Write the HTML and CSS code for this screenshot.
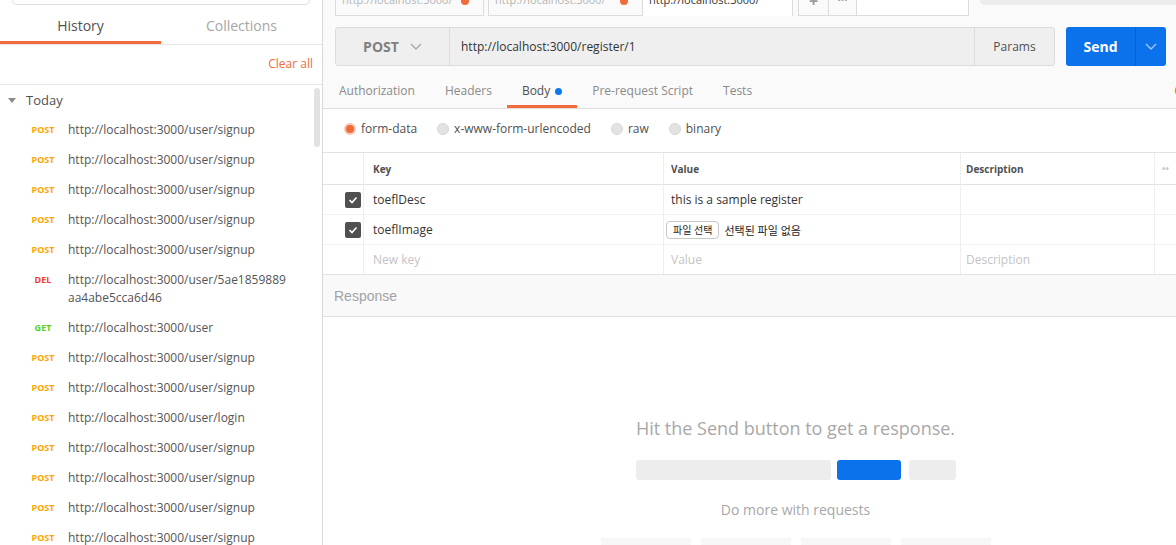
FILE: index.html
```html
<!DOCTYPE html>
<html lang="en">
<head>
<meta charset="utf-8">
<title>Postman</title>
<link rel="stylesheet" href="styles.css">
</head>
<body>
<div class="app">
  <aside class="sidebar">
    <div class="search-wrap"><div class="search"></div></div>
    <div class="side-tabs">
      <div class="side-tab active">History</div>
      <div class="side-tab">Collections</div>
    </div>
    <div class="clear-row"><span class="clear">Clear all</span></div>
    <div class="history">
      <div class="scrollbar"></div>
      <div class="group"><span class="caret"></span>Today</div>
      <div class="item"><span class="m post">POST</span><span class="url">http://localhost:3000/user/signup</span></div>
      <div class="item"><span class="m post">POST</span><span class="url">http://localhost:3000/user/signup</span></div>
      <div class="item"><span class="m post">POST</span><span class="url">http://localhost:3000/user/signup</span></div>
      <div class="item"><span class="m post">POST</span><span class="url">http://localhost:3000/user/signup</span></div>
      <div class="item"><span class="m post">POST</span><span class="url">http://localhost:3000/user/signup</span></div>
      <div class="item"><span class="m del">DEL</span><span class="url">http://localhost:3000/user/5ae1859889<br>aa4abe5cca6d46</span></div>
      <div class="item"><span class="m get">GET</span><span class="url">http://localhost:3000/user</span></div>
      <div class="item"><span class="m post">POST</span><span class="url">http://localhost:3000/user/signup</span></div>
      <div class="item"><span class="m post">POST</span><span class="url">http://localhost:3000/user/signup</span></div>
      <div class="item"><span class="m post">POST</span><span class="url">http://localhost:3000/user/login</span></div>
      <div class="item"><span class="m post">POST</span><span class="url">http://localhost:3000/user/signup</span></div>
      <div class="item"><span class="m post">POST</span><span class="url">http://localhost:3000/user/signup</span></div>
      <div class="item"><span class="m post">POST</span><span class="url">http://localhost:3000/user/signup</span></div>
      <div class="item"><span class="m post">POST</span><span class="url">http://localhost:3000/user/signup</span></div>
    </div>
  </aside>

  <main class="main">
    <div class="top">
      <div class="tabstrip">
        <div class="tab t1"><span class="tab-label">http://localhost:3000/</span><span class="tab-dot"></span></div>
        <div class="tab t2"><span class="tab-label">http://localhost:3000/</span><span class="tab-dot"></span></div>
        <div class="tab t3 active"><span class="tab-label">http://localhost:3000/</span></div>
        <div class="tab-btn plus"><span class="tab-label">+</span></div>
        <div class="tab-btn more"><span class="tab-label">•••</span></div>
        <div class="tab-blank"></div>
        <div class="env-select"></div>
      </div>

      <div class="urlbar">
        <div class="url-group">
          <div class="method">POST
            <svg class="chev" width="12" height="7" viewBox="0 0 12 7"><path d="M1 1l5 5 5-5" fill="none" stroke="#a8a8a8" stroke-width="1.4"/></svg>
          </div>
          <div class="url-input">http://localhost:3000/register/1</div>
          <div class="params">Params</div>
        </div>
        <div class="send">
          <div class="send-label">Send</div>
          <div class="send-more">
            <svg width="12" height="7" viewBox="0 0 12 7"><path d="M1 1l5 5 5-5" fill="none" stroke="#9fc6f5" stroke-width="1.4"/></svg>
          </div>
        </div>
      </div>

      <div class="reqtabs">
        <div class="rtab">Authorization</div>
        <div class="rtab">Headers</div>
        <div class="rtab active">Body<span class="bdot"></span></div>
        <div class="rtab">Pre-request Script</div>
        <div class="rtab">Tests</div>
        <div class="spacer"></div>
        <div class="cookies">Cookies</div>
      </div>
    </div>

    <div class="radios">
      <label class="radio"><span class="rdot on"></span>form-data</label>
      <label class="radio"><span class="rdot"></span>x-www-form-urlencoded</label>
      <label class="radio"><span class="rdot"></span>raw</label>
      <label class="radio"><span class="rdot"></span>binary</label>
    </div>

    <div class="kv">
      <div class="c h first"></div>
      <div class="c h ck">Key</div>
      <div class="c h cv">Value</div>
      <div class="c h cd">Description</div>
      <div class="c h dots">••</div>

      <div class="c first"><span class="check"><svg width="10" height="8" viewBox="0 0 10 8"><path d="M1.5 4l2.5 2.5 4.5-5" fill="none" stroke="#fff" stroke-width="1.6"/></svg></span></div>
      <div class="c ck">toeflDesc</div>
      <div class="c cv">this is a sample register</div>
      <div class="c cd"></div>
      <div class="c"></div>

      <div class="c first"><span class="check"><svg width="10" height="8" viewBox="0 0 10 8"><path d="M1.5 4l2.5 2.5 4.5-5" fill="none" stroke="#fff" stroke-width="1.6"/></svg></span></div>
      <div class="c ck">toeflImage</div>
      <div class="c cv file"><span class="file-btn">파일 선택</span><span class="file-none">선택된 파일 없음</span></div>
      <div class="c cd"></div>
      <div class="c"></div>

      <div class="c first last"></div>
      <div class="c ck last ph">New key</div>
      <div class="c cv last ph">Value</div>
      <div class="c cd last ph">Description</div>
      <div class="c last"></div>
    </div>

    <div class="resp">Response</div>

    <div class="empty">
      <div class="empty-title">Hit the Send button to get a response.</div>
      <div class="bars">
        <span class="bar b1"></span><span class="bar b2"></span><span class="bar b3"></span>
      </div>
      <div class="empty-sub">Do more with requests</div>
      <div class="cards">
        <span class="card"></span><span class="card"></span><span class="card"></span><span class="card"></span>
      </div>
    </div>
  </main>
</div>
</body>
</html>
```

FILE: styles.css
```css
* { box-sizing: border-box; }
html, body { margin: 0; padding: 0; }
body {
  font-family: "Open Sans", "Noto Sans CJK KR", sans-serif;
  color: #505050;
  background: #fff;
  overflow: hidden;
}
.app { display: flex; width: 1176px; height: 545px; overflow: hidden; }

/* ---------- sidebar ---------- */
.sidebar {
  width: 323px;
  flex: none;
  display: flex;
  flex-direction: column;
  border-right: 1px solid #d9d9d9;
  background: #fff;
}
.search-wrap { height: 5px; padding: 0 12px; flex: none; }
.search { height: 5px; border: 1px solid #dedede; border-top: none; border-radius: 0 0 12px 12px; }

.side-tabs { display: flex; flex: none; border-bottom: 1px solid #e6e6e6; }
.side-tab {
  flex: 1;
  text-align: center;
  font-size: 14px;
  line-height: 20px;
  padding: 11px 0 5px;
  border-bottom: 3px solid transparent;
  color: #a6a6a6;
}
.side-tab.active { color: #505050; border-bottom-color: #f26b3a; }

.clear-row {
  flex: none;
  padding: 10px 9px 11px;
  text-align: right;
  font-size: 12px;
  line-height: 18px;
  border-bottom: 1px solid #e6e6e6;
}
.clear { color: #f26b3a; }

.history { position: relative; flex: 1; overflow: hidden; }
.scrollbar {
  position: absolute;
  right: 2px;
  top: 3px;
  width: 6px;
  height: 59px;
  border-radius: 3px;
  background: #e2e2e2;
}
.group {
  display: flex;
  align-items: center;
  padding: 6px 0 6px 8px;
  font-size: 13px;
  line-height: 18px;
  color: #505050;
}
.caret {
  width: 0; height: 0;
  border-left: 4px solid transparent;
  border-right: 4px solid transparent;
  border-top: 5px solid #8a8a8a;
  margin-right: 10px;
}
.item { display: flex; align-items: flex-start; padding: 6px 0; line-height: 18px; }
.m {
  flex: none;
  width: 38px;
  margin-left: 24px;
  margin-right: 6px;
  text-align: center;
  font-size: 9px;
  font-weight: 700;
  line-height: 18px;
}
.m.post { color: #ffa400; }
.m.del { color: #f23b3b; }
.m.get { color: #55d12e; }
.url { font-size: 12px; color: #555; }

/* ---------- main ---------- */
.main {
  flex: 1;
  min-width: 0;
  display: flex;
  flex-direction: column;
  overflow: hidden;
  background: #fff;
}
.main > * { flex: none; }
.top { background: #fafafa; }

.tabstrip { display: flex; height: 16px; padding-left: 12px; }
.tab {
  height: 16px;
  overflow: hidden;
  display: flex;
  align-items: flex-start;
  justify-content: space-between;
  padding: 0 14px 0 6px;
  border: 1px solid #dcdcdc;
  border-top: none;
  background: #fafafa;
  font-size: 11px;
  color: #b5b5b5;
}
.tab-label { display: block; line-height: 16px; margin-top: -8px; white-space: nowrap; }
.tab-dot { width: 8px; height: 8px; border-radius: 50%; background: #f26b3a; margin-top: -3px; flex: none; }
.t1 { width: 149px; }
.t2 { width: 155px; margin-left: 4px; }
.t3 { width: 150px; border-bottom: none; border-left: none; background: #fff; color: #333; }
.tab-btn {
  height: 16px;
  overflow: hidden;
  display: flex;
  align-items: flex-start;
  justify-content: center;
  border: 1px solid #dcdcdc;
  border-top: none;
  color: #9a9a9a;
  background: #fafafa;
}
.plus { width: 31px; margin-left: 5px; }
.plus .tab-label { margin-top: -6px; font-size: 16px; font-weight: 700; line-height: 14px; }
.more { width: 28px; border-left: none; }
.more .tab-label { font-size: 9px; margin-top: -6px; line-height: 12px; letter-spacing: 0; }
.tab-blank { width: 112px; height: 16px; border: 1px solid #dcdcdc; border-top: none; border-left: none; background: #fff; }
.env-select { flex: 1; height: 5px; margin-left: 11px; background: #ececec; border-radius: 0 0 0 6px; }

.urlbar { display: flex; height: 39px; margin: 11px 10px 0 12px; }
.url-group {
  flex: 1;
  display: flex;
  border: 1px solid #dcdcdc;
  border-radius: 3px;
  background: #efefef;
}
.method {
  width: 114px;
  flex: none;
  display: flex;
  align-items: center;
  justify-content: center;
  gap: 11px;
  border-right: 1px solid #dcdcdc;
  font-size: 14px;
  font-weight: 700;
  color: #808080;
}
.url-input { flex: 1; display: flex; align-items: center; padding-left: 11px; font-size: 12px; color: #333; }
.params {
  width: 80px;
  flex: none;
  display: flex;
  align-items: center;
  justify-content: center;
  border-left: 1px solid #dcdcdc;
  font-size: 12px;
  color: #505050;
}
.send {
  width: 100px;
  flex: none;
  margin-left: 11px;
  display: flex;
  background: #0b72ec;
  border-radius: 3px;
  color: #fff;
}
.send-label { flex: 1; display: flex; align-items: center; justify-content: center; font-size: 14px; font-weight: 700; }
.send-more { width: 31px; display: flex; align-items: center; justify-content: center; border-left: 1px solid #0a60c9; }

.reqtabs { display: flex; border-bottom: 1px solid #dedede; padding-left: 1px; }
.rtab {
  padding: 16px 15px 5px;
  font-size: 12px;
  line-height: 18px;
  color: #8a8a8a;
  border-bottom: 3px solid transparent;
  white-space: nowrap;
}
.rtab.active { color: #505050; border-bottom-color: #f26b3a; }
.bdot { display: inline-block; width: 7px; height: 7px; border-radius: 50%; background: #097bed; margin-left: 5px; vertical-align: 0; }
.spacer { flex: 1; }
.cookies { padding-top: 16px; font-size: 12px; line-height: 18px; color: #f26b3a; margin-right: -42px; white-space: nowrap; }

.radios { display: flex; align-items: center; gap: 20px; padding: 11px 0 14px 21px; line-height: 18px; font-size: 12px; color: #505050; }
.radio { display: flex; align-items: center; gap: 5px; }
.rdot { width: 12px; height: 12px; border-radius: 50%; background: #e3e3e3; border: 1px solid #d6d6d6; }
.rdot.on { background: #f26b3a; border: 2px solid #f6c6b2; }

.kv {
  display: grid;
  grid-template-columns: 40px 300px 297px 194px 1fr;
  border-top: 1px solid #e2e2e2;
  border-bottom: 1px solid #e2e2e2;
}
.c {
  height: 30px;
  display: flex;
  align-items: center;
  padding: 0 7px;
  border-left: 1px solid #efefef;
  border-bottom: 1px solid #f2f2f2;
  font-size: 12px;
  color: #333;
  white-space: nowrap;
  overflow: hidden;
}
.c.ck { padding-left: 9px; }
.c.cv { padding-left: 7px; }
.c.cd { padding-left: 5px; }
.c.first { border-left: none; padding: 0 0 0 22px; }
.c.h { height: 32px; border-bottom: 1px solid #e2e2e2; font-size: 10px; font-weight: 700; color: #505050; }
.c.dots { color: #c8c8c8; font-size: 9px; letter-spacing: 0; }
.c.last { border-bottom: none; height: 29px; }
.c.ph { color: #c4c4c4; }
.check {
  width: 16px;
  height: 16px;
  border-radius: 2px;
  background: #505050;
  display: flex;
  align-items: center;
  justify-content: center;
}
.c.file { padding-left: 2px; }
.file-btn {
  font-size: 10px;
  line-height: 16px;
  padding: 0 6px;
  border: 1px solid #c8c8c8;
  border-radius: 4px;
  background: #fff;
  color: #222;
  margin-right: 5px;
}
.file-none { font-size: 11px; color: #222; }

.resp {
  height: 42px;
  display: flex;
  align-items: center;
  padding-left: 11px;
  background: #f9f9f9;
  border-bottom: 1px solid #e2e2e2;
  font-family: "Liberation Sans", Arial, sans-serif;
  font-size: 14px;
  color: #a3a3a3;
}

.empty { padding-left: 92px; display: flex; flex-direction: column; align-items: center; }
.empty-title { margin-top: 99px; font-size: 18px; line-height: 24px; color: #a8a8a8; }
.bars { display: flex; margin-top: 20px; height: 20px; }
.bar { height: 20px; border-radius: 3px; background: #ededed; }
.b1 { width: 195px; }
.b2 { width: 64px; margin-left: 6px; background: #0b72ec; }
.b3 { width: 47px; margin-left: 8px; }
.empty-sub { margin-top: 20px; font-size: 14px; line-height: 20px; color: #a8a8a8; }
.cards { display: flex; gap: 10px; margin-top: 18px; }
.card { width: 90px; height: 30px; background: #f7f7f7; }
```
